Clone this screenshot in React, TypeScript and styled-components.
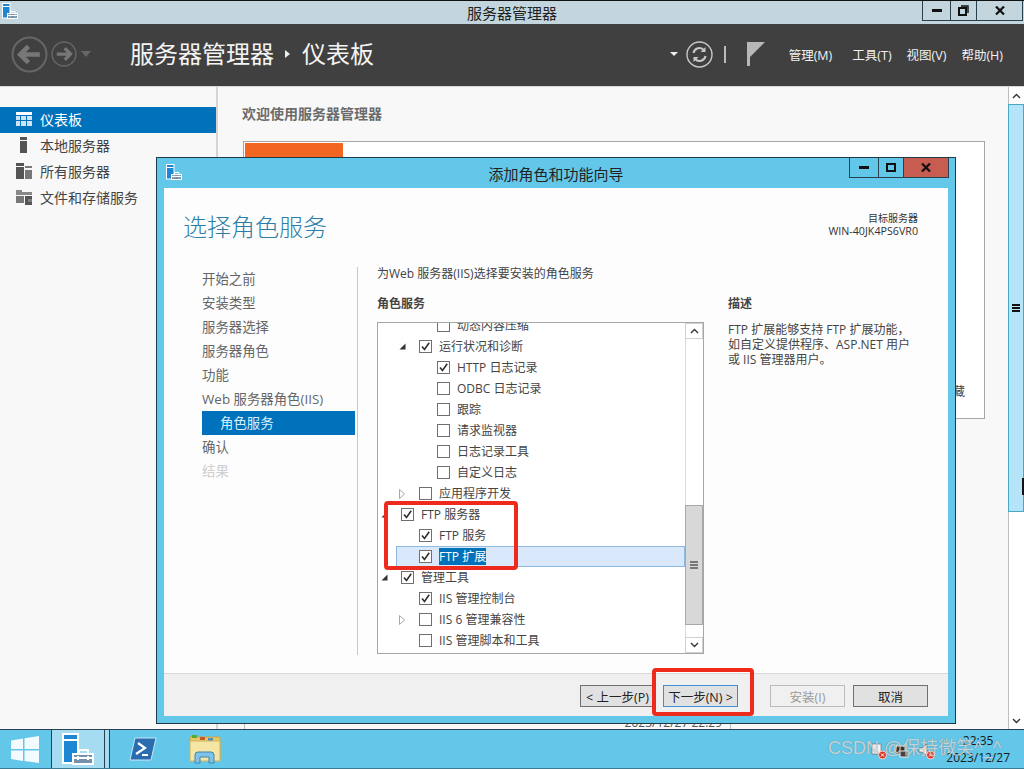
import { createGlobalStyle } from 'styled-components';
import styled from 'styled-components';

const FONT = `"Open Sans", "Noto Sans CJK SC", sans-serif`;

const GlobalStyle = createGlobalStyle`
  html, body {
    margin: 0;
    padding: 0;
    background: #f8f8f8;
  }
  * {
    box-sizing: border-box;
  }
`;

const Screen = styled.div`
  position: relative;
  width: 1024px;
  height: 769px;
  overflow: hidden;
  display: flex;
  flex-direction: column;
  font-family: ${FONT};
  background: #f8f8f8;
`;

const TitleBar = styled.div`
  position: relative;
  height: 24px;
  flex: none;
  display: flex;
  align-items: center;
  justify-content: center;
  border-top: 1px solid #111;
  background: #c3d6dd;
  font-size: 15px;
  color: #222;
`;
const TitleIcon = styled.div`
  position: absolute;
  left: 2px;
  top: 2px;
  display: flex;
`;
const WindowButtons = styled.div`
  position: absolute;
  top: 0;
  right: ${(p: { $right: number }) => p.$right}px;
  display: flex;
  height: 20px;
  border: 1px solid #27414f;
  border-top: none;
`;
const WindowButton = styled.div<{ $w: number; $tint?: string }>`
  width: ${(p) => p.$w}px;
  display: flex;
  align-items: center;
  justify-content: center;
  background: ${(p) => p.$tint ?? 'transparent'};
  & + & {
    border-left: 1px solid #27414f;
  }
`;

const Header = styled.header`
  height: 63px;
  flex: none;
  display: flex;
  align-items: center;
  background: #404040;
  border-bottom: 1px solid #d8d8d8;
  padding: 0 21px 2px 11px;
  color: #fff;
`;
const NavArrows = styled.div`
  display: flex;
  align-items: center;
  width: 119px;
  gap: 3px;
`;
const Crumb = styled.div`
  font-size: 24px;
  line-height: 32px;
  display: flex;
  align-items: center;
  color: #f4f4f4;
`;
const CrumbArrow = styled.span`
  width: 0;
  height: 0;
  margin: 0 12px 0 11px;
  border-left: 5px solid #eee;
  border-top: 4px solid transparent;
  border-bottom: 4px solid transparent;
`;
const HeaderTools = styled.div`
  margin-left: auto;
  display: flex;
  align-items: center;
`;
const Caret = styled.span`
  width: 0;
  height: 0;
  border-top: 4px solid #eee;
  border-left: 4px solid transparent;
  border-right: 4px solid transparent;
  margin-right: 8px;
`;
const Separator = styled.span`
  width: 2px;
  height: 17px;
  background: #bbb;
  margin: 0 21px 0 11px;
`;
const Menu = styled.nav`
  display: flex;
  margin-left: 24px;
  gap: 20px;
  font-size: 12.5px;
  color: #f2f2f2;
`;
const MenuItem = styled.span<{ $gap?: number }>`
  margin-left: ${(p) => p.$gap ?? 0}px;
`;

const Main = styled.main`
  flex: 1;
  min-height: 0;
  display: flex;
`;
const Sidebar = styled.aside`
  width: 218px;
  flex: none;
  padding-top: 20px;
  border-right: 2px solid #d4d4d4;
  background: #f8f8f8;
`;
const SideItem = styled.div<{ $active?: boolean }>`
  height: 26px;
  display: flex;
  align-items: center;
  padding: 0 0 2px 16px;
  gap: 8px;
  font-size: 14px;
  color: ${(p) => (p.$active ? '#fff' : '#444')};
  background: ${(p) => (p.$active ? '#0072bc' : 'transparent')};
`;
const Content = styled.section`
  flex: 1;
  min-width: 0;
  display: flex;
  flex-direction: column;
  padding: 18px 0 0 24px;
`;
const Welcome = styled.h2`
  margin: 0 0 18px;
  font-size: 14px;
  line-height: 18px;
  font-weight: 700;
  color: #6b6b6b;
`;
const QuickPanel = styled.div`
  margin-left: 1px;
  width: 742px;
  height: 278px;
  padding: 1px;
  border: 1px solid #a6a6a6;
  background: #fff;
  display: flex;
  flex-direction: column;
`;
const OrangeTile = styled.div`
  width: 98px;
  height: 100px;
  background: #f26522;
`;
const HideLink = styled.span`
  margin-top: auto;
  margin-bottom: 17px;
  align-self: flex-end;
  margin-right: 18px;
  font-size: 12px;
  line-height: 16px;
  color: #444;
`;
const EventRow = styled.div`
  margin-top: auto;
  margin-left: 2px;
  width: 487px;
  height: 17px;
  display: flex;
  align-items: center;
  justify-content: flex-end;
  padding: 4px 8px 0 0;
  border-left: 1px solid #bbb;
  border-right: 1px solid #bbb;
  font-size: 12px;
  color: #555;
`;
const PageScroll = styled.div`
  position: relative;
  width: 16px;
  flex: none;
  display: flex;
  flex-direction: column;
  background: #fff;
  border-left: 1px solid #bdbdbd;
`;
const ScrollButton = styled.div<{ $h?: number }>`
  height: ${(p) => p.$h ?? 16}px;
  flex: none;
  display: flex;
  align-items: center;
  justify-content: center;
  background: #fff;
`;
const PageThumb = styled.div`
  height: 408px;
  display: flex;
  align-items: center;
  justify-content: center;
  background: #b5e3f8;
  border: 1px solid #46a9c1;
  margin-left: -1px;
`;
const ThumbNotch = styled.div`
  position: absolute;
  right: 0;
  top: 391px;
  width: 2px;
  height: 17px;
  background: #111;
`;
const Grip = styled.div<{ $color: string }>`
  width: 8px;
  height: 8px;
  background: repeating-linear-gradient(
    to bottom,
    ${(p) => p.$color} 0,
    ${(p) => p.$color} 2px,
    transparent 2px,
    transparent 3px
  );
`;
const Spacer = styled.div`
  flex: 1;
`;

const Taskbar = styled.footer`
  height: 40px;
  flex: none;
  display: flex;
  align-items: center;
  background: #63c7ea;
  border-top: 1px solid #27414f;
  border-bottom: 1px solid #3b7c94;
`;
const StartSlot = styled.div`
  width: 51px;
  display: flex;
  justify-content: center;
  padding-right: 2px;
`;
const ActiveApp = styled.div`
  width: 54px;
  height: 38px;
  display: flex;
  align-items: center;
  justify-content: center;
  background: #a5dcf2;
  border-left: 1px solid #27414f;
  border-right: 1px solid #27414f;
`;
const AppTail = styled.div`
  width: 5px;
  height: 38px;
  background: #a5dcf2;
  border-right: 1px solid #27414f;
`;
const PinnedApp = styled.div<{ $w: number }>`
  width: ${(p) => p.$w}px;
  display: flex;
  justify-content: center;
`;
const Tray = styled.div`
  margin-left: auto;
  display: flex;
  align-items: center;
  padding-right: 14px;
`;
const TrayIcon = styled.span<{ $gap: number }>`
  display: flex;
  margin: 3px ${(p) => p.$gap}px 0 0;
`;
const Clock = styled.div`
  display: flex;
  flex-direction: column;
  align-items: center;
  font-size: 12px;
  line-height: 17px;
  color: #1a1a1a;
`;

const Dialog = styled.div`
  position: absolute;
  left: 156px;
  top: 157px;
  width: 800px;
  height: 567px;
  display: flex;
  flex-direction: column;
  padding: 0 7px 7px;
  background: #63c7ea;
  border: 1px solid #1d3a46;
`;
const DialogTitle = styled.div`
  position: relative;
  height: 30px;
  flex: none;
  display: flex;
  align-items: center;
  justify-content: center;
  padding-top: 1px;
  font-size: 15px;
  color: #222;
`;
const DialogIcon = styled.div`
  position: absolute;
  left: 2px;
  top: 6px;
  display: flex;
`;
const Client = styled.div`
  flex: 1;
  min-height: 0;
  display: flex;
  flex-direction: column;
  background: #fdfdfd;
`;
const ClientHead = styled.div`
  height: 79px;
  flex: none;
  display: flex;
  justify-content: space-between;
  padding: 22px 30px 0 19px;
`;
const WizardTitle = styled.h1`
  margin: 0;
  font-size: 24px;
  line-height: 34px;
  font-weight: 300;
  color: #2b7ea6;
`;
const TargetServer = styled.div`
  display: flex;
  flex-direction: column;
  align-items: flex-end;
  padding-top: 2px;
  font-size: 10px;
  line-height: 13px;
  color: #333;
`;
const TargetName = styled.span`
  font-size: 10.7px;
`;
const ClientBody = styled.div`
  flex: 1;
  min-height: 0;
  display: flex;
`;
const StepList = styled.div`
  width: 153px;
  margin-left: 38px;
  flex: none;
  display: flex;
  flex-direction: column;
`;
const Step = styled.div<{ $active?: boolean; $disabled?: boolean; $sub?: boolean }>`
  height: 24px;
  display: flex;
  align-items: center;
  padding-left: ${(p) => (p.$sub ? 18 : 0)}px;
  padding-bottom: 2px;
  font-size: 13.4px;
  white-space: nowrap;
  color: ${(p) => (p.$active ? '#d6effa' : p.$disabled ? '#cfcfcf' : '#666')};
  background: ${(p) => (p.$active ? '#0072bc' : 'transparent')};
`;
const VerticalRule = styled.div`
  width: 1px;
  height: 388px;
  margin-left: 2px;
  background: #c8c8c8;
`;
const RightPane = styled.div`
  flex: 1;
  display: grid;
  grid-template-columns: 327px 1fr;
  column-gap: 24px;
  grid-template-rows: auto auto 1fr;
  padding-left: 19px;
`;
const Intro = styled.div`
  grid-column: 1 / 3;
  margin-top: -1px;
  font-size: 12px;
  line-height: 16px;
  color: #444;
`;
const PaneLabel = styled.div`
  margin-top: 14px;
  font-size: 12px;
  line-height: 16px;
  font-weight: 700;
  color: #444;
`;
const DescColumn = styled.div`
  grid-column: 2;
  grid-row: 2 / 4;
  width: 190px;
`;
const DescText = styled.p`
  margin: 10px 0 0;
  font-size: 12px;
  line-height: 15px;
  color: #444;
`;
const ListBox = styled.div`
  grid-column: 1;
  width: 327px;
  height: 332px;
  margin-top: 10px;
  display: flex;
  border: 1px solid #a6a6a6;
  background: #fff;
  overflow: hidden;
`;
const TreeRows = styled.div`
  width: 307px;
  flex: none;
  margin-top: -8px;
`;
const Row = styled.div<{ $level: number; $selected?: boolean }>`
  height: 21px;
  display: flex;
  align-items: center;
  white-space: nowrap;
  font-size: 12px;
  color: #444;
  margin-left: ${(p) => (p.$selected ? 18 : 0)}px;
  padding-left: ${(p) => 5 + 18 * p.$level - (p.$selected ? 18 : 0)}px;
  background: ${(p) => (p.$selected ? '#d9e8fb' : 'transparent')};
  box-shadow: ${(p) => (p.$selected ? 'inset 0 0 0 1px #8fb8de' : 'none')};
`;
const ArrowSlot = styled.span`
  width: 18px;
  flex: none;
  display: flex;
  align-items: center;
  & > svg {
    margin-left: -2px;
  }
`;
const CheckBox = styled.span`
  width: 13px;
  height: 13px;
  flex: none;
  margin-right: 7px;
  display: flex;
  align-items: center;
  justify-content: center;
  border: 1px solid #6f6f6f;
  background: #fff;
`;
const RowLabel = styled.span<{ $selected?: boolean }>`
  line-height: 17px;
  color: ${(p) => (p.$selected ? '#fff' : 'inherit')};
  background: ${(p) => (p.$selected ? '#0072bc' : 'transparent')};
`;
const ListScroll = styled.div`
  width: 18px;
  flex: none;
  display: flex;
  flex-direction: column;
  border-left: 1px solid #dcdcdc;
  background: #fff;
`;
const ListScrollButton = styled(ScrollButton)`
  border: 1px solid #cfcfcf;
  margin-left: -1px;
`;
const ListThumb = styled.div`
  height: 120px;
  margin-top: auto;
  margin-left: -1px;
  display: flex;
  align-items: center;
  justify-content: center;
  background: #d8d8d8;
  border: 1px solid #a9a9a9;
`;
const ScrollGap = styled.div`
  height: 12px;
`;

const DialogFooter = styled.div`
  height: 43px;
  flex: none;
  display: flex;
  align-items: flex-start;
  padding: 11px 0 0 416px;
  background: #f0f0f0;
  border-top: 1px solid #d9d9d9;
`;
const WizardButton = styled.div<{ $variant?: 'primary' | 'disabled'; $gap?: number }>`
  width: 75px;
  height: 22px;
  margin-left: ${(p) => p.$gap ?? 0}px;
  display: flex;
  align-items: center;
  justify-content: center;
  font-size: 12.5px;
  white-space: nowrap;
  color: ${(p) => (p.$variant === 'disabled' ? '#9a9a9a' : '#222')};
  background: ${(p) => (p.$variant === 'disabled' ? '#f0f0f0' : '#e1e1e1')};
  border: 1px solid
    ${(p) => (p.$variant === 'primary' ? '#3d8fd1' : p.$variant === 'disabled' ? '#bcbcbc' : '#707070')};
`;

const RedMark = styled.div<{ $x: number; $y: number; $w: number; $h: number }>`
  position: absolute;
  left: ${(p) => p.$x}px;
  top: ${(p) => p.$y}px;
  width: ${(p) => p.$w}px;
  height: ${(p) => p.$h}px;
  border: 4px solid #ee2a1c;
  border-radius: 4px;
`;
const Watermark = styled.div`
  position: absolute;
  left: 828px;
  top: 735px;
  font-family: "Liberation Sans", "Noto Sans CJK SC", sans-serif;
  font-size: 18px;
  line-height: 26px;
  white-space: nowrap;
  color: rgba(238, 242, 242, 0.72);
  text-shadow: 0 0 1px rgba(70, 70, 70, 0.6);
`;

function ServerManagerIcon({ size = 16 }: { size?: number }) {
  return (
    <svg width={size} height={size} viewBox="0 0 16 16">
      <rect x="0.5" y="0.5" width="7.5" height="14.5" fill="#1f86d4" stroke="#fff" />
      <path d="M1 3.5h6.5" stroke="#fff" />
      <path d="M8.5 10.5V8.5h4.5v2" fill="none" stroke="#fff" />
      <rect x="5.5" y="10.5" width="10" height="5" fill="#7692a8" stroke="#fff" />
      <path d="M6 12.5h9" stroke="#fff" />
      <path d="M8 11.5v2M13 11.5v2" stroke="#fff" />
    </svg>
  );
}

function CircleArrow({ size, flip }: { size: number; flip?: boolean }) {
  return (
    <svg width={size} height={size} viewBox="0 0 36 36">
      <circle cx="18" cy="18" r="16.5" fill="none" stroke="#666" strokeWidth="2" />
      <g transform={flip ? 'rotate(180 18 18)' : undefined}>
        <path d="M28 18H10M17 10l-8 8 8 8" fill="none" stroke="#777" strokeWidth="4.5" />
      </g>
    </svg>
  );
}

function Refresh() {
  return (
    <svg width="27" height="27" viewBox="0 0 27 27">
      <circle cx="13.5" cy="13.5" r="12.5" fill="none" stroke="#c8c8c8" strokeWidth="1.4" />
      <path d="M7.5 12a6 6 0 0 1 10.5-2.8M19.5 15a6 6 0 0 1-10.5 2.8" fill="none" stroke="#c8c8c8" strokeWidth="2" />
      <path d="M19.5 6v5h-5zM7.5 21v-5h5z" fill="#c8c8c8" />
    </svg>
  );
}

function Flag() {
  return (
    <svg width="18" height="24" viewBox="0 0 18 24">
      <rect x="0" y="0" width="3" height="24" fill="#b8b8b8" />
      <path d="M3 0h15L3 15z" fill="#b8b8b8" />
    </svg>
  );
}

function DashboardIcon() {
  return (
    <svg width="16" height="16" viewBox="0 0 16 16">
      <rect x="0" y="1" width="16" height="3" fill="#fff" />
      <path d="M0 5h4v4H0zM5 5h5v4H5zM11 5h5v4h-5zM0 10h4v5H0zM5 10h5v5H5zM11 10h5v5h-5z" fill="#cfe3f2" />
    </svg>
  );
}

function LocalServerIcon() {
  return (
    <svg width="16" height="16" viewBox="0 0 16 16">
      <rect x="4" y="0" width="7" height="3" fill="#555" />
      <rect x="4" y="4" width="7" height="12" fill="#555" />
    </svg>
  );
}

function AllServersIcon() {
  return (
    <svg width="16" height="16" viewBox="0 0 16 16">
      <rect x="0" y="0" width="8" height="3" fill="#555" />
      <rect x="0" y="4" width="8" height="12" fill="#555" />
      <rect x="9" y="3" width="7" height="2" fill="#777" />
      <rect x="9" y="7" width="7" height="9" fill="#777" />
    </svg>
  );
}

function FilesIcon() {
  return (
    <svg width="16" height="16" viewBox="0 0 16 16">
      <path d="M0 1h6v2h10v3H0z" fill="#888" />
      <path d="M0 7h8v7H0z" fill="#777" />
      <path d="M9 7h7v9H9z" fill="#555" />
      <path d="M12 10l4 0v3l-4 0z" fill="#ddd" opacity="0.3" />
    </svg>
  );
}

function Chevron({ down }: { down?: boolean }) {
  return (
    <svg width="9" height="6" viewBox="0 0 9 6">
      <path d={down ? 'M1 1l3.5 3.5L8 1' : 'M1 5l3.5-3.5L8 5'} fill="none" stroke="#333" strokeWidth="1.4" />
    </svg>
  );
}

function TreeArrow({ open }: { open: boolean }) {
  return open ? (
    <svg width="7" height="7" viewBox="0 0 7 7">
      <path d="M6.5 0.5v6h-6z" fill="#333" />
    </svg>
  ) : (
    <svg width="6" height="10" viewBox="0 0 6 10">
      <path d="M0.5 0.5l5 4.5-5 4.5z" fill="#fff" stroke="#a8a8a8" />
    </svg>
  );
}

function CheckMark() {
  return (
    <svg width="11" height="11" viewBox="0 0 11 11">
      <path d="M2 5.5l2.5 3L9.2 1.8" fill="none" stroke="#2e2e2e" strokeWidth="1.6" />
    </svg>
  );
}

function WindowsLogo() {
  return (
    <svg width="28" height="27" viewBox="0 0 28 27">
      <path d="M0 4.5l12-2V13H0zM13.5 2.2L28 0v13H13.5zM0 14.5h12V25L0 23zM13.5 14.5H28V27l-14.5-2z" fill="#fff" opacity="0.92" />
    </svg>
  );
}

function PowerShellIcon() {
  return (
    <svg width="28" height="24" viewBox="0 0 28 24">
      <path d="M6 1h21l-5 22H1z" fill="#2a6cb0" stroke="#cfe4f2" strokeWidth="1" />
      <path d="M9 6l7 5-9 6" fill="none" stroke="#fff" strokeWidth="2.2" />
      <path d="M13 18h6" stroke="#fff" strokeWidth="2" />
    </svg>
  );
}

function ExplorerIcon() {
  return (
    <svg width="33" height="30" viewBox="0 0 33 30">
      <path d="M1 3h30v22H1z" fill="#e9c765" stroke="#c8a544" />
      <rect x="3" y="1" width="5" height="3" fill="#58a83c" />
      <rect x="11" y="3" width="5" height="3" fill="#c45a2a" />
      <rect x="19" y="4" width="5" height="3" fill="#4f8fb8" />
      <path d="M1 7h30v20H1z" fill="#f6e6a6" stroke="#d3b45a" />
      <path d="M6 29v-8a3 3 0 0 1 3-3h13a3 3 0 0 1 3 3v8h-5v-6h-9v6z" fill="#7fc3e8" stroke="#3c84b5" />
    </svg>
  );
}

function TrayFlag() {
  return (
    <svg width="18" height="18" viewBox="0 0 18 18">
      <path d="M2 2h9v10H2z" fill="#f4f4f4" stroke="#666" strokeWidth="0.6" />
      <circle cx="12.5" cy="13" r="4" fill="#d8352a" stroke="#f3d9d9" />
      <path d="M11 11.5l3 3M14 11.5l-3 3" stroke="#fff" />
    </svg>
  );
}

function TrayNetwork() {
  return (
    <svg width="16" height="16" viewBox="0 0 16 16">
      <rect x="1" y="3" width="10" height="8" fill="#333" stroke="#eee" />
      <rect x="6" y="8" width="8" height="6" fill="#444" stroke="#eee" />
    </svg>
  );
}

function TraySound() {
  return (
    <svg width="18" height="18" viewBox="0 0 18 18">
      <path d="M1 6h3l5-4v12l-5-4H1z" fill="#f4f4f4" stroke="#555" strokeWidth="0.6" />
      <circle cx="12.5" cy="13" r="4" fill="#d8352a" stroke="#f3d9d9" />
      <path d="M11 11.5l3 3M14 11.5l-3 3" stroke="#fff" />
    </svg>
  );
}

type TreeNode = {
  label: string;
  level: number;
  checked?: boolean;
  arrow?: 'open' | 'closed';
  selected?: boolean;
};

const treeNodes: TreeNode[] = [
  { label: '动态内容压缩', level: 2 },
  { label: '运行状况和诊断', level: 1, checked: true, arrow: 'open' },
  { label: 'HTTP 日志记录', level: 2, checked: true },
  { label: 'ODBC 日志记录', level: 2 },
  { label: '跟踪', level: 2 },
  { label: '请求监视器', level: 2 },
  { label: '日志记录工具', level: 2 },
  { label: '自定义日志', level: 2 },
  { label: '应用程序开发', level: 1, arrow: 'closed' },
  { label: 'FTP 服务器', level: 0, checked: true, arrow: 'open' },
  { label: 'FTP 服务', level: 1, checked: true },
  { label: 'FTP 扩展', level: 1, checked: true, selected: true },
  { label: '管理工具', level: 0, checked: true, arrow: 'open' },
  { label: 'IIS 管理控制台', level: 1, checked: true },
  { label: 'IIS 6 管理兼容性', level: 1, arrow: 'closed' },
  { label: 'IIS 管理脚本和工具', level: 1 },
];

const steps = ['开始之前', '安装类型', '服务器选择', '服务器角色', '功能', 'Web 服务器角色(IIS)'];

function App() {
  return (
    <Screen>
      <GlobalStyle />

      <TitleBar>
        <TitleIcon>
          <ServerManagerIcon />
        </TitleIcon>
        服务器管理器
        <WindowButtons $right={1}>
          <WindowButton $w={27}>
            <svg width="10" height="4" viewBox="0 0 10 4"><rect y="0" width="10" height="3" fill="#111" /></svg>
          </WindowButton>
          <WindowButton $w={26}>
            <svg width="11" height="11" viewBox="0 0 11 11">
              <path d="M3 1h7v7" fill="none" stroke="#111" strokeWidth="1.4" />
              <rect x="1" y="3" width="7" height="7" fill="none" stroke="#111" strokeWidth="2" />
            </svg>
          </WindowButton>
          <WindowButton $w={46}>
            <svg width="10" height="9" viewBox="0 0 10 9"><path d="M1 0.5l8 8M9 0.5l-8 8" stroke="#111" strokeWidth="2.2" /></svg>
          </WindowButton>
        </WindowButtons>
      </TitleBar>

      <Header>
        <NavArrows>
          <CircleArrow size={37} />
          <CircleArrow size={26} flip />
          <svg width="12" height="6" viewBox="0 0 12 6"><path d="M1 0h10L6 6z" fill="#666" /></svg>
        </NavArrows>
        <Crumb>
          服务器管理器
          <CrumbArrow />
          仪表板
        </Crumb>
        <HeaderTools>
          <Caret />
          <Refresh />
          <Separator />
          <Flag />
          <Menu>
            <MenuItem>管理(M)</MenuItem>
            <MenuItem>工具(T)</MenuItem>
            <MenuItem $gap={-5}>视图(V)</MenuItem>
            <MenuItem $gap={-5}>帮助(H)</MenuItem>
          </Menu>
        </HeaderTools>
      </Header>

      <Main>
        <Sidebar>
          <SideItem $active><DashboardIcon />仪表板</SideItem>
          <SideItem><LocalServerIcon />本地服务器</SideItem>
          <SideItem><AllServersIcon />所有服务器</SideItem>
          <SideItem><FilesIcon />文件和存储服务</SideItem>
        </Sidebar>
        <Content>
          <Welcome>欢迎使用服务器管理器</Welcome>
          <QuickPanel>
            <OrangeTile />
            <HideLink>藏</HideLink>
          </QuickPanel>
          <EventRow>2023/12/27 22:29</EventRow>
        </Content>
        <PageScroll>
          <ScrollButton $h={17}><Chevron /></ScrollButton>
          <PageThumb><Grip $color="#111" /></PageThumb>
          <Spacer />
          <ScrollButton $h={16}><Chevron down /></ScrollButton>
          <ThumbNotch />
        </PageScroll>
      </Main>

      <Taskbar>
        <StartSlot><WindowsLogo /></StartSlot>
        <ActiveApp><ServerManagerIcon size={32} /></ActiveApp>
        <AppTail />
        <PinnedApp $w={66}><PowerShellIcon /></PinnedApp>
        <PinnedApp $w={58}><ExplorerIcon /></PinnedApp>
        <Tray>
          <TrayIcon $gap={6}><TrayFlag /></TrayIcon>
          <TrayIcon $gap={8}><TrayNetwork /></TrayIcon>
          <TrayIcon $gap={10}><TraySound /></TrayIcon>
          <Clock>
            <span>22:35</span>
            <span>2023/12/27</span>
          </Clock>
        </Tray>
      </Taskbar>

      <Dialog>
        <DialogTitle>
          <DialogIcon><ServerManagerIcon /></DialogIcon>
          添加角色和功能向导
          <WindowButtons $right={-1}>
            <WindowButton $w={28}>
              <svg width="10" height="4" viewBox="0 0 10 4"><rect y="0" width="10" height="3" fill="#111" /></svg>
            </WindowButton>
            <WindowButton $w={25}>
              <svg width="10" height="9" viewBox="0 0 10 9"><rect x="1" y="1" width="8" height="7" fill="none" stroke="#111" strokeWidth="2" /></svg>
            </WindowButton>
            <WindowButton $w={45} $tint="#c75c50">
              <svg width="10" height="9" viewBox="0 0 10 9"><path d="M1 0.5l8 8M9 0.5l-8 8" stroke="#111" strokeWidth="2.2" /></svg>
            </WindowButton>
          </WindowButtons>
        </DialogTitle>
        <Client>
          <ClientHead>
            <WizardTitle>选择角色服务</WizardTitle>
            <TargetServer>
              目标服务器
              <TargetName>WIN-40JK4PS6VR0</TargetName>
            </TargetServer>
          </ClientHead>
          <ClientBody>
            <StepList>
              {steps.map((s) => (
                <Step key={s}>{s}</Step>
              ))}
              <Step $active $sub>角色服务</Step>
              <Step>确认</Step>
              <Step $disabled>结果</Step>
            </StepList>
            <VerticalRule />
            <RightPane>
              <Intro>为Web 服务器(IIS)选择要安装的角色服务</Intro>
              <PaneLabel>角色服务</PaneLabel>
              <DescColumn>
                <PaneLabel>描述</PaneLabel>
                <DescText>
                  FTP 扩展能够支持 FTP 扩展功能，
                  <br />
                  如自定义提供程序、ASP.NET 用户
                  <br />
                  或 IIS 管理器用户。
                </DescText>
              </DescColumn>
              <ListBox>
                <TreeRows>
                  {treeNodes.map((n) => (
                    <Row key={n.label} $level={n.level} $selected={n.selected}>
                      <ArrowSlot>{n.arrow && <TreeArrow open={n.arrow === 'open'} />}</ArrowSlot>
                      <CheckBox>{n.checked && <CheckMark />}</CheckBox>
                      <RowLabel $selected={n.selected}>{n.label}</RowLabel>
                    </Row>
                  ))}
                </TreeRows>
                <ListScroll>
                  <ListScrollButton $h={16}><Chevron /></ListScrollButton>
                  <ListThumb><Grip $color="#777" /></ListThumb>
                  <ScrollGap />
                  <ListScrollButton $h={16}><Chevron down /></ListScrollButton>
                </ListScroll>
              </ListBox>
            </RightPane>
          </ClientBody>
          <DialogFooter>
            <WizardButton>&lt; 上一步(P)</WizardButton>
            <WizardButton $variant="primary" $gap={8}>下一步(N) &gt;</WizardButton>
            <WizardButton $variant="disabled" $gap={32}>安装(I)</WizardButton>
            <WizardButton $gap={8}>取消</WizardButton>
          </DialogFooter>
        </Client>
      </Dialog>

      <RedMark $x={384} $y={501} $w={134} $h={69} />
      <RedMark $x={652} $y={668} $w={102} $h={48} />
      <Watermark>CSDN @保持微笑^_^</Watermark>
    </Screen>
  );
}

export default App;
